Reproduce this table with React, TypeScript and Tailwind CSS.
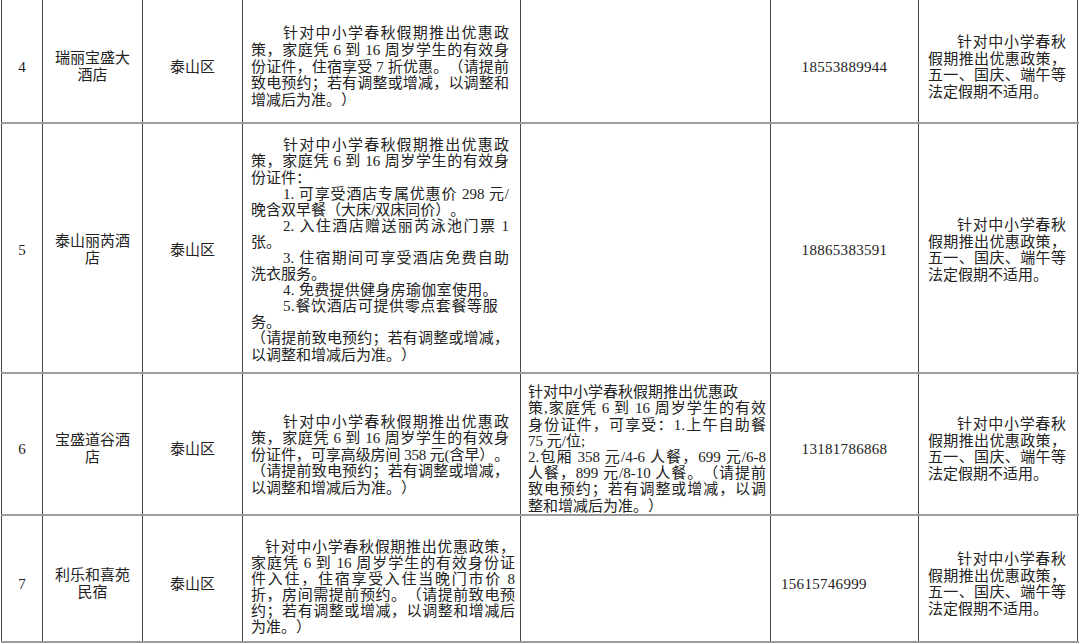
import React from "react";

type LineSpec = { t: string; j?: boolean; c?: string };

function Lines({ lines, cls }: { lines: LineSpec[]; cls: string }) {
  return (
    <div className={cls}>
      {lines.map((l, i) => (
        <div
          key={i}
          className={(l.j ? "text-justify [text-align-last:justify] " : "text-left ") + (l.c ?? "")}
        >
          {l.t}
        </div>
      ))}
    </div>
  );
}

const col7: LineSpec[] = [
  { t: "针对中小学春秋", j: true, c: "pl-[29px]" },
  { t: "假期推出优惠政策，", j: true },
  { t: "五一、国庆、端午等", j: true },
  { t: "法定假期不适用。" },
];

type RowProps = {
  h: string;
  pt: string;
  no: string;
  name: [string, string];
  policy: React.ReactNode;
  extra?: React.ReactNode;
  phone: string;
  phoneLeft?: boolean;
  c7lead: string;
};

function Row({ h, pt, no, name, policy, extra, phone, phoneLeft, c7lead }: RowProps) {
  const cell = "border-l border-[#474747] flex flex-col justify-center " + pt;
  return (
    <div className={"grid grid-cols-[41px_100px_100px_278px_250px_148px_160px] border-b-2 border-[#9c9c9c] " + h}>
      <div className={cell + " items-center text-[15px]"}>{no}</div>
      <div className={cell + " items-center text-center text-[15px] leading-[17px]"}>
        <div>{name[0]}</div>
        <div>{name[1]}</div>
      </div>
      <div className={cell + " items-center text-[15px]"}>泰山区</div>
      <div className={cell}>{policy}</div>
      <div className={cell}>{extra}</div>
      <div
        className={
          cell +
          (phoneLeft ? " items-start pl-[10px]" : " items-center") +
          " text-[15px] tracking-[0.3px]"
        }
      >
        {phone}
      </div>
      <div className={cell + " border-r pl-[9px] pr-[11px]"}>
        <Lines lines={col7} cls={"text-[15px] " + c7lead} />
      </div>
    </div>
  );
}

export default function App() {
  return (
    <div className="w-[1080px] h-[644px] overflow-hidden bg-white text-[#222] [text-spacing-trim:space-all] font-['Liberation_Serif','Noto_Sans_CJK_SC',serif]">
      <div className="ml-[1px] w-[1078px]">
        <Row
          h="h-[124px]"
          pt="pt-[12px]"
          no="4"
          name={["瑞丽宝盛大", "酒店"]}
          c7lead="leading-[16.5px]"
          phone="18553889944"
          policy={
            <Lines
              cls="pl-[8px] pr-[11px] text-[15px] leading-[16.75px]"
              lines={[
                { t: "针对中小学春秋假期推出优惠政", j: true, c: "pl-[32px]" },
                { t: "策，家庭凭 6 到 16 周岁学生的有效身", j: true },
                { t: "份证件，住宿享受 7 折优惠。（请提前", j: true },
                { t: "致电预约；若有调整或增减，以调整和", j: true },
                { t: "增减后为准。）" },
              ]}
            />
          }
        />
        <Row
          h="h-[250px]"
          pt="pt-[4px]"
          no="5"
          name={["泰山丽芮酒", "店"]}
          c7lead="leading-[16.5px]"
          phone="18865383591"
          policy={
            <Lines
              cls="pl-[8px] pr-[11px] text-[15px] leading-[16.1px]"
              lines={[
                { t: "针对中小学春秋假期推出优惠政", j: true, c: "pl-[32px]" },
                { t: "策，家庭凭 6 到 16 周岁学生的有效身", j: true },
                { t: "份证件：" },
                { t: "1. 可享受酒店专属优惠价 298 元/", j: true, c: "pl-[32px]" },
                { t: "晚含双早餐（大床/双床同价）。" },
                { t: "2. 入住酒店赠送丽芮泳池门票 1", j: true, c: "pl-[32px]" },
                { t: "张。" },
                { t: "3. 住宿期间可享受酒店免费自助", j: true, c: "pl-[32px]" },
                { t: "洗衣服务。" },
                { t: "4. 免费提供健身房瑜伽室使用。", c: "pl-[32px] tracking-[0.3px]" },
                { t: "5.餐饮酒店可提供零点套餐等服", c: "pl-[32px] tracking-[0.6px]" },
                { t: "务。" },
                { t: "（请提前致电预约；若有调整或增减，", j: true },
                { t: "以调整和增减后为准。）" },
              ]}
            />
          }
        />
        <Row
          h="h-[142px]"
          pt="pt-[10px]"
          no="6"
          name={["宝盛道谷酒", "店"]}
          c7lead="leading-[16.5px]"
          phone="13181786868"
          policy={
            <Lines
              cls="pl-[8px] pr-[11px] pt-[12px] text-[15px] leading-[16.5px]"
              lines={[
                { t: "针对中小学春秋假期推出优惠政", j: true, c: "pl-[32px]" },
                { t: "策，家庭凭 6 到 16 周岁学生的有效身", j: true },
                { t: "份证件，可享高级房间 358 元(含早）。", j: true, c: "tracking-[-0.3px]" },
                { t: "（请提前致电预约；若有调整或增减，", j: true },
                { t: "以调整和增减后为准。）" },
              ]}
            />
          }
          extra={
            <Lines
              cls="pl-[7px] pr-[4px] text-[15px] leading-[16.2px]"
              lines={[
                { t: "针对中小学春秋假期推出优惠政" },
                { t: "策,家庭凭 6 到 16 周岁学生的有效", j: true },
                { t: "身份证件，可享受：1.上午自助餐", j: true },
                { t: "75 元/位;" },
                { t: "2.包厢 358 元/4-6 人餐，699 元/6-8", j: true },
                { t: "人餐，899 元/8-10 人餐。（请提前", j: true },
                { t: "致电预约；若有调整或增减，以调", j: true },
                { t: "整和增减后为准。）" },
              ]}
            />
          }
        />
        <Row
          h="h-[127px]"
          pt="pt-[11px]"
          no="7"
          name={["利乐和喜苑", "民宿"]}
          c7lead="leading-[16.5px]"
          phone="15615746999"
          phoneLeft
          policy={
            <Lines
              cls="pl-[8px] pr-[5px] pt-[6px] text-[15px] leading-[16px]"
              lines={[
                { t: "针对中小学春秋假期推出优惠政策，", j: true, c: "pl-[14px]" },
                { t: "家庭凭 6 到 16 周岁学生的有效身份证", j: true },
                { t: "件入住，住宿享受入住当晚门市价 8", j: true },
                { t: "折，房间需提前预约。（请提前致电预", j: true },
                { t: "约；若有调整或增减，以调整和增减后", j: true },
                { t: "为准。）" },
              ]}
            />
          }
        />
      </div>
    </div>
  );
}
